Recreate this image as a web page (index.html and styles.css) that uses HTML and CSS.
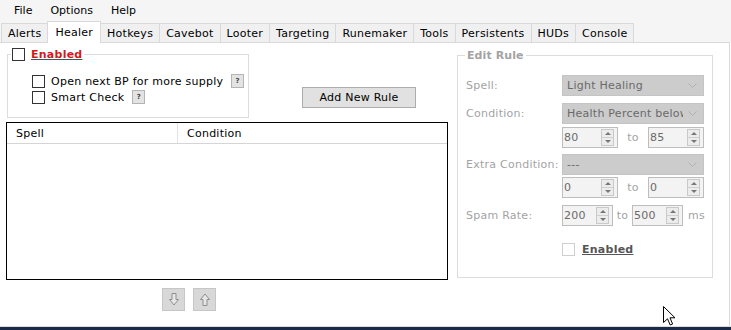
FILE: index.html
```html
<!DOCTYPE html>
<html lang="en">
<head>
    <meta charset="UTF-8">
    <title>Healer</title>
    <link rel="stylesheet" href="styles.css">
</head>
<body>
    <div class="menubar">
        <span class="menu-item">File</span>
        <span class="menu-item">Options</span>
        <span class="menu-item">Help</span>
    </div>

    <div class="tabs">
        <span class="tab">Alerts</span>
        <span class="tab active">Healer</span>
        <span class="tab">Hotkeys</span>
        <span class="tab">Cavebot</span>
        <span class="tab">Looter</span>
        <span class="tab">Targeting</span>
        <span class="tab">Runemaker</span>
        <span class="tab">Tools</span>
        <span class="tab">Persistents</span>
        <span class="tab">HUDs</span>
        <span class="tab">Console</span>
    </div>

    <div class="panel">
        <div class="left">
            <div class="top-row">
                <fieldset class="group healer-group">
                    <legend class="check-legend">
                        <span class="checkbox"></span>
                        <span class="enabled-red">Enabled</span>
                    </legend>
                    <div class="opt first">
                        <span class="checkbox"></span>
                        <span>Open next BP for more supply</span>
                        <span class="help">?</span>
                    </div>
                    <div class="opt">
                        <span class="checkbox"></span>
                        <span>Smart Check</span>
                        <span class="help">?</span>
                    </div>
                </fieldset>
                <button class="btn add-rule">Add New Rule</button>
            </div>

            <div class="list">
                <div class="list-head">
                    <div class="col col-spell">Spell</div>
                    <div class="col col-cond">Condition</div>
                </div>
            </div>

            <div class="arrows">
                <span class="arrow-btn">
                    <svg width="12" height="15" viewBox="0 0 12 15"><path d="M4 1.5 H8 V7.5 H10.5 L6 13 L1.5 7.5 H4 Z" fill="#e6e6e6" stroke="#8f8f8f" stroke-width="1"/></svg>
                </span>
                <span class="arrow-btn">
                    <svg width="12" height="15" viewBox="0 0 12 15"><path d="M4 13.5 H8 V7.5 H10.5 L6 2 L1.5 7.5 H4 Z" fill="#e6e6e6" stroke="#8f8f8f" stroke-width="1"/></svg>
                </span>
            </div>
        </div>

        <fieldset class="group edit-rule">
            <legend class="edit-legend">Edit Rule</legend>

            <div class="field spell-row">
                <label>Spell:</label>
                <div class="combo"><span>Light Healing</span><svg width="9" height="5" viewBox="0 0 9 5"><path d="M0.5 0.5 L4.5 4.5 L8.5 0.5" fill="none" stroke="#b0b0b0"/></svg></div>
            </div>
            <div class="field">
                <label>Condition:</label>
                <div class="combo"><span>Health Percent below</span><svg width="9" height="5" viewBox="0 0 9 5"><path d="M0.5 0.5 L4.5 4.5 L8.5 0.5" fill="none" stroke="#b0b0b0"/></svg></div>
            </div>
            <div class="field tight">
                <label></label>
                <div class="spin"><span>80</span><span class="spin-btn"><i class="up"></i><i class="down"></i></span></div>
                <span class="to">to</span>
                <div class="spin"><span>85</span><span class="spin-btn"><i class="up"></i><i class="down"></i></span></div>
            </div>
            <div class="field mid">
                <label>Extra Condition:</label>
                <div class="combo"><span>---</span><svg width="9" height="5" viewBox="0 0 9 5"><path d="M0.5 0.5 L4.5 4.5 L8.5 0.5" fill="none" stroke="#b0b0b0"/></svg></div>
            </div>
            <div class="field tighter">
                <label></label>
                <div class="spin"><span>0</span><span class="spin-btn"><i class="up"></i><i class="down"></i></span></div>
                <span class="to">to</span>
                <div class="spin"><span>0</span><span class="spin-btn"><i class="up"></i><i class="down"></i></span></div>
            </div>
            <div class="field">
                <label>Spam Rate:</label>
                <div class="spin small"><span>200</span><span class="spin-btn"><i class="up"></i><i class="down"></i></span></div>
                <span class="to short">to</span>
                <div class="spin small"><span>500</span><span class="spin-btn"><i class="up"></i><i class="down"></i></span></div>
                <span class="ms">ms</span>
            </div>
            <div class="field check-row">
                <label></label>
                <span class="checkbox disabled"></span>
                <span class="enabled-gray">Enabled</span>
            </div>
        </fieldset>
    </div>

    <div class="taskbar"></div>

    <svg class="cursor" width="13" height="20" viewBox="0 0 13 20"><path d="M0.5 0.5 V16.5 L4.5 12.8 L7.2 19 L9.6 18 L7 11.8 H12 Z" fill="#fff" stroke="#000" stroke-width="1" stroke-linejoin="miter"/></svg>
</body>
</html>
```

FILE: styles.css
```css
body {
    margin: 0;
    width: 731px;
    height: 330px;
    overflow: hidden;
    position: relative;
    display: flex;
    flex-direction: column;
    font-family: 'DejaVu Sans', Verdana, sans-serif;
    font-size: 11px;
    letter-spacing: 0.25px;
    color: #000;
    background-color: #fff;
}

/* Menu bar */
.menubar {
    height: 21px;
    display: flex;
    align-items: center;
    padding-left: 5px;
    background-color: #f5f5f5;
}

.menu-item {
    padding: 0 9px;
    letter-spacing: 0;
}

/* Tabs */
.tabs {
    height: 21px;
    display: flex;
    align-items: flex-end;
    padding-left: 2px;
    background-color: #f5f5f5;
}

.tab {
    height: 18px;
    display: flex;
    align-items: center;
    padding: 0 6px;
    margin-left: -1px;
    border: 1px solid #d9d9d9;
    border-bottom: none;
    background-color: #f0f0f0;
}

.tab.active {
    height: 21px;
    margin-bottom: -1px;
    padding: 0 7px;
    background-color: #fff;
    position: relative;
    z-index: 1;
}

/* Main panel */
.panel {
    flex: 1;
    display: flex;
    gap: 9px;
    padding: 5px 0 0 6px;
    width: 723px;
    border-top: 1px solid #d9d9d9;
    border-right: 1px solid #d9d9d9;
    background-color: #fff;
}

.left {
    width: 442px;
    display: flex;
    flex-direction: column;
}

.top-row {
    display: flex;
    align-items: flex-start;
}

.group {
    margin: 0;
    border: 1px solid #dcdcdc;
    min-width: 0;
}

.healer-group {
    width: 242px;
    height: 70px;
    padding: 0 0 0 24px;
    margin-left: 1px;
    box-sizing: border-box;
}

.check-legend {
    display: flex;
    align-items: center;
    gap: 6px;
    padding: 0 1px;
    margin-left: -21px;
}

.checkbox {
    width: 11px;
    height: 11px;
    border: 1px solid #333;
    background-color: #fff;
    flex: none;
}

.checkbox.disabled {
    border-color: #cfcfcf;
}

.enabled-red {
    color: #d11b1b;
    font-weight: bold;
    text-decoration: underline;
}

.opt {
    display: flex;
    align-items: center;
    gap: 6px;
    height: 16px;
}

.opt.first {
    margin-top: 12px;
}

.help {
    width: 11px;
    height: 12px;
    margin-left: 2px;
    border: 1px solid #b4b4b4;
    background-color: #e3e3e3;
    font-size: 7px;
    font-weight: bold;
    color: #444;
    display: flex;
    align-items: center;
    justify-content: center;
}

.btn {
    font-family: inherit;
    font-size: 11px;
    letter-spacing: inherit;
    background-color: #e1e1e1;
    border: 1px solid #adadad;
    padding: 0;
    color: #000;
}

.add-rule {
    width: 114px;
    height: 21px;
    margin: 39px 0 0 53px;
}

/* Rules list */
.list {
    margin-top: 4px;
    height: 156px;
    border: 1px solid #000;
    background-color: #fff;
}

.list-head {
    display: flex;
    height: 20px;
    border-bottom: 1px solid #d5d5d5;
}

.col {
    display: flex;
    align-items: center;
    padding-left: 9px;
}

.col-spell {
    width: 161px;
    border-right: 1px solid #e3e3e3;
}

.arrows {
    display: flex;
    gap: 8px;
    margin-top: 8px;
    padding-left: 156px;
}

.arrow-btn {
    width: 21px;
    height: 21px;
    border: 1px solid #c6c6c6;
    background-color: #d8d8d8;
    display: flex;
    align-items: center;
    justify-content: center;
}

/* Edit rule group */
.edit-rule {
    width: 256px;
    height: 229px;
    box-sizing: border-box;
    padding: 0 0 0 8px;
    margin-top: 1px;
    color: #a3a3a3;
}

.edit-legend {
    font-weight: bold;
    padding: 0 2px;
    margin-left: -1px;
    letter-spacing: 0.1px;
}

.field {
    display: flex;
    align-items: center;
    height: 21px;
    margin-top: 7px;
}

.field.spell-row {
    margin-top: 13px;
}

.field.tight {
    margin-top: 3px;
}

.field.mid {
    margin-top: 6px;
}

.field.tighter {
    margin-top: 2px;
}

.field.check-row {
    margin-top: 13px;
}

.field label {
    width: 96px;
    flex: none;
    white-space: nowrap;
}

.combo {
    width: 130px;
    height: 19px;
    border: 1px solid #c4c4c4;
    background-color: #cccccc;
    color: #6a6a6a;
    display: flex;
    align-items: center;
    justify-content: space-between;
    padding: 0 6px 0 4px;
    overflow: hidden;
    white-space: nowrap;
}

.combo span {
    overflow: hidden;
    width: 116px;
}

.spin {
    width: 53px;
    height: 19px;
    border: 1px solid #bdbdbd;
    background-color: #f3f3f3;
    color: #6a6a6a;
    display: flex;
    align-items: center;
    justify-content: space-between;
    padding-left: 1px;
}

.spin.small {
    width: 48px;
}

.spin-btn {
    width: 11px;
    height: 15px;
    margin-right: 3px;
    border: 1px solid #c9c9c9;
    background-color: #ececec;
    display: flex;
    flex-direction: column;
}

.spin-btn i {
    flex: 1;
    display: flex;
    align-items: center;
    justify-content: center;
}

.spin-btn i::before {
    content: "";
    border-left: 3px solid transparent;
    border-right: 3px solid transparent;
}

.spin-btn .up {
    border-bottom: 1px solid #d0d0d0;
}

.spin-btn .up::before {
    border-bottom: 3px solid #777;
}

.spin-btn .down::before {
    border-top: 3px solid #777;
}

.to {
    width: 30px;
    text-align: center;
}

.to.short {
    width: 19px;
}

.ms {
    margin-left: 5px;
}

.enabled-gray {
    margin-left: 7px;
    color: #555;
    font-weight: bold;
    text-decoration: underline;
}

.taskbar {
    height: 3px;
    border-top: 1px solid #d8dee6;
    background-color: #1b2a46;
}

.cursor {
    position: absolute;
    left: 663px;
    top: 306px;
}
```
